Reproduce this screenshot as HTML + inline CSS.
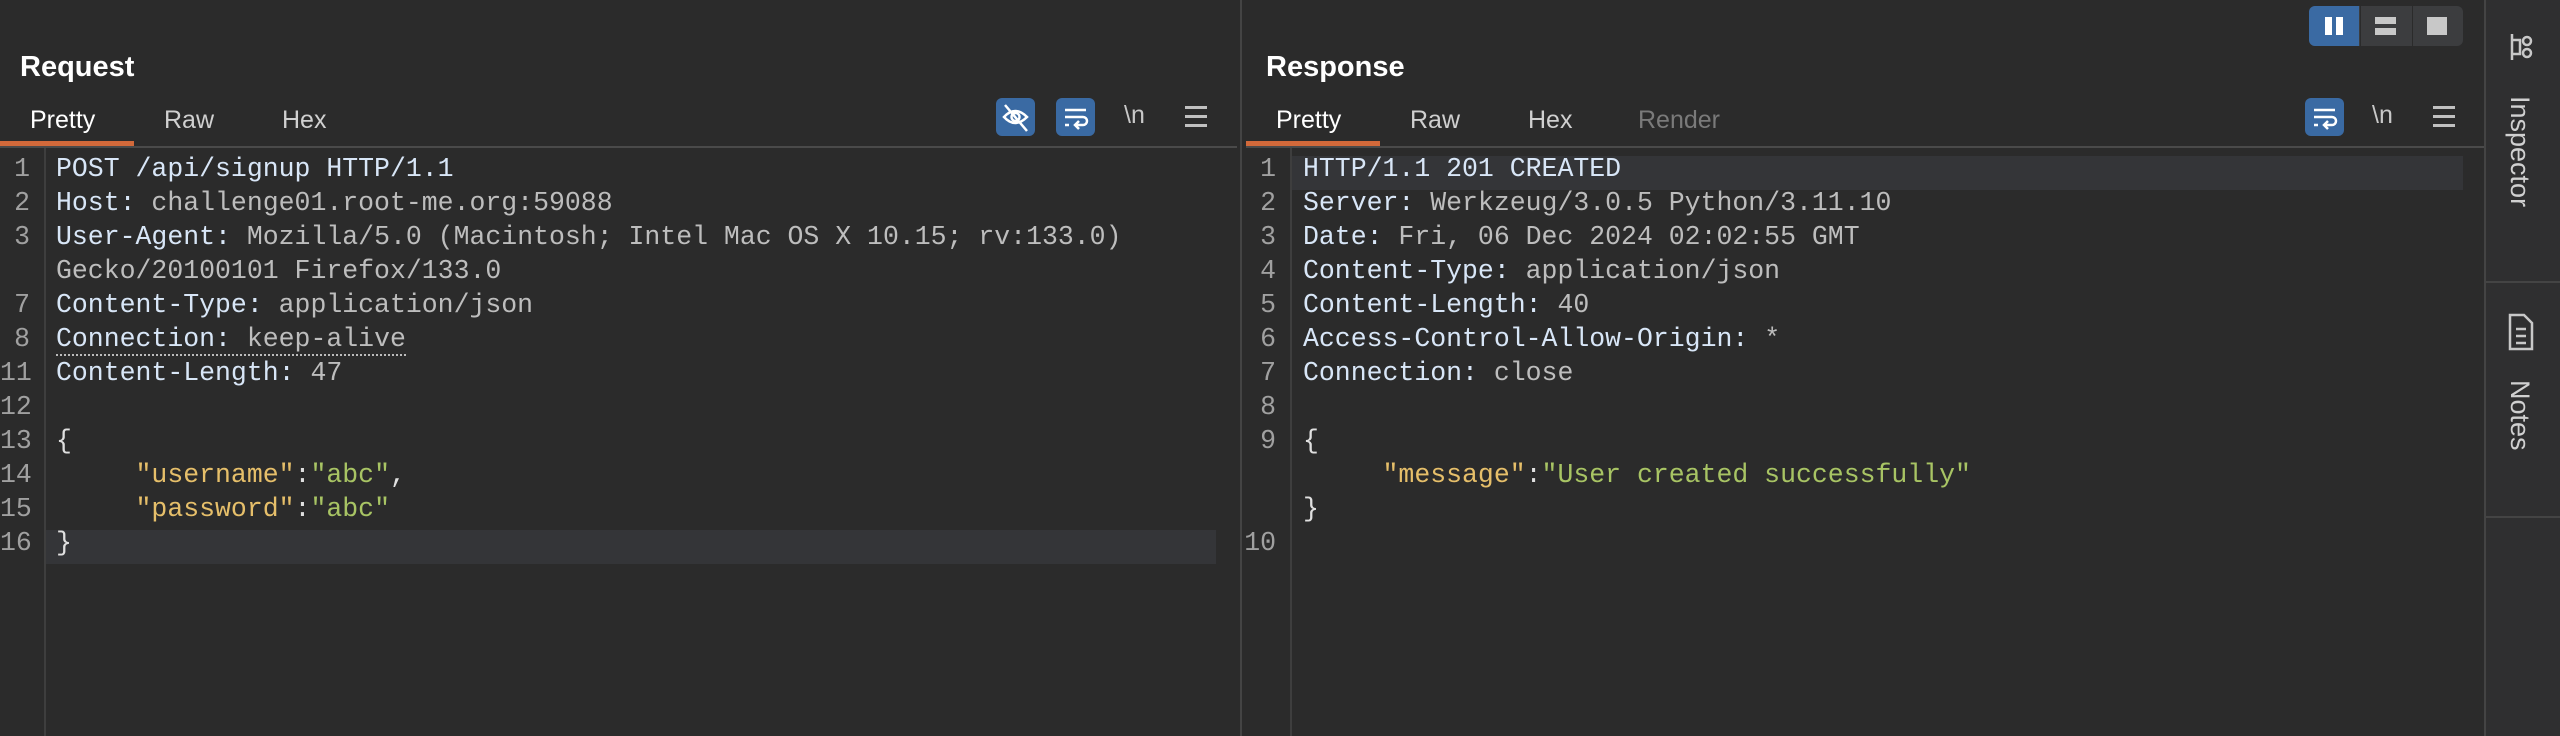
<!DOCTYPE html>
<html><head><meta charset="utf-8"><style>
*{margin:0;padding:0;box-sizing:border-box}
body{width:2560px;height:736px;background:#2b2b2b;overflow:hidden;position:relative;font-family:"Liberation Sans",sans-serif}
.abs{position:absolute}
.title{font-weight:bold;font-size:29px;color:#fff;top:51px}
.tab{font-size:25px;color:#d0d0d0;top:106px}
.code{font-family:"Liberation Mono",monospace;font-size:26.5px;white-space:pre;line-height:34px}
.ln{color:#a0a0a0;text-align:right}
.k{color:#d8e6f7}.v{color:#bdbdbd}.y{color:#e6bf6a}.g{color:#a8c464}.w{color:#e0e0e0}
.btn{background:#3a6aa3;border-radius:6px}
</style></head><body>
<div class="abs title" style="left:20px">Request</div>
<div class="abs tab" style="left:30px;color:#fff">Pretty</div>
<div class="abs tab" style="left:164px">Raw</div>
<div class="abs tab" style="left:282px">Hex</div>
<div class="abs" style="left:0;top:141px;width:134px;height:5px;background:#d2693a"></div>
<div class="abs" style="left:0;top:146px;width:1237px;height:2px;background:#4a4a4a"></div>
<div class="abs btn" style="left:996px;top:98px;width:39px;height:38px">
<svg width="39" height="38" viewBox="0 0 39 38"><path d="M8 19 Q19 7 31 19 Q19 31 8 19Z" fill="none" stroke="#fff" stroke-width="2.5"/><circle cx="19.5" cy="19" r="4" fill="none" stroke="#fff" stroke-width="2.5"/><line x1="9" y1="7" x2="31" y2="33" stroke="#fff" stroke-width="2.5"/></svg></div>
<div class="abs btn" style="left:1056px;top:98px;width:39px;height:38px">
<svg width="39" height="38" viewBox="0 0 39 38"><path d="M9 12H30M9 19H27a4 4 0 0 1 0 8H20M23 23l-4 4 4 4M9 27h4" fill="none" stroke="#fff" stroke-width="2.5"/></svg></div>
<div class="abs" style="left:1124px;top:101px;font-size:25px;color:#c8c8c8">\n</div>
<div class="abs" style="left:1185px;top:106px;width:22px"><div style="height:3px;background:#c0c0c0;margin-bottom:6px"></div><div style="height:3px;background:#c0c0c0;margin-bottom:6px"></div><div style="height:3px;background:#c0c0c0"></div></div>
<div class="abs" style="left:44px;top:148px;width:2px;height:588px;background:#3e3e3e"></div>
<div class="abs" style="left:46px;top:530px;width:1170px;height:34px;background:#343538"></div>
<div class="abs code ln" style="left:0;top:152px;width:30px">1
2
3

7
8
11
12
13
14
15
16</div>
<div class="abs code" style="left:56px;top:152px"><span class="k">POST /api/signup HTTP/1.1</span>
<span class="k">Host: </span><span class="v">challenge01.root-me.org:59088</span>
<span class="k">User-Agent: </span><span class="v">Mozilla/5.0 (Macintosh; Intel Mac OS X 10.15; rv:133.0)</span>
<span class="v">Gecko/20100101 Firefox/133.0</span>
<span class="k">Content-Type: </span><span class="v">application/json</span>
<span style="border-bottom:2px dotted #bbb"><span class="k">Connection: </span><span class="v">keep-alive</span></span>
<span class="k">Content-Length: </span><span class="v">47</span>

<span class="w">{</span>
     <span class="y">"username"</span><span class="w">:</span><span class="g">"abc"</span><span class="w">,</span>
     <span class="y">"password"</span><span class="w">:</span><span class="g">"abc"</span>
<span class="w">}</span></div>
<div class="abs" style="left:1240px;top:0;width:2px;height:736px;background:#444"></div>
<div class="abs title" style="left:1266px">Response</div>
<div class="abs tab" style="left:1276px;color:#fff">Pretty</div>
<div class="abs tab" style="left:1410px">Raw</div>
<div class="abs tab" style="left:1528px">Hex</div>
<div class="abs tab" style="left:1638px;color:#7a7a7a">Render</div>
<div class="abs" style="left:1246px;top:141px;width:134px;height:5px;background:#d2693a"></div>
<div class="abs" style="left:1246px;top:146px;width:1238px;height:2px;background:#4a4a4a"></div>
<div class="abs btn" style="left:2305px;top:98px;width:39px;height:38px">
<svg width="39" height="38" viewBox="0 0 39 38"><path d="M9 12H30M9 19H27a4 4 0 0 1 0 8H20M23 23l-4 4 4 4M9 27h4" fill="none" stroke="#fff" stroke-width="2.5"/></svg></div>
<div class="abs" style="left:2372px;top:101px;font-size:25px;color:#c8c8c8">\n</div>
<div class="abs" style="left:2433px;top:106px;width:22px"><div style="height:3px;background:#c0c0c0;margin-bottom:6px"></div><div style="height:3px;background:#c0c0c0;margin-bottom:6px"></div><div style="height:3px;background:#c0c0c0"></div></div>
<div class="abs" style="left:2309px;top:6px;width:154px;height:40px;background:#3c3d3f;border-radius:6px;overflow:hidden">
<div class="abs" style="left:0;top:0;width:50px;height:40px;background:#3a6aa3"></div>
<div class="abs" style="left:16px;top:11px;width:7px;height:18px;background:#fff"></div>
<div class="abs" style="left:27px;top:11px;width:7px;height:18px;background:#fff"></div>
<div class="abs" style="left:51px;top:0;width:1px;height:40px;background:#2b2b2b"></div>
<div class="abs" style="left:66px;top:11px;width:21px;height:7px;background:#c8c8c8"></div>
<div class="abs" style="left:66px;top:22px;width:21px;height:7px;background:#c8c8c8"></div>
<div class="abs" style="left:103px;top:0;width:1px;height:40px;background:#2b2b2b"></div>
<div class="abs" style="left:118px;top:11px;width:20px;height:18px;background:#c8c8c8"></div>
</div>
<div class="abs" style="left:1290px;top:148px;width:2px;height:588px;background:#3e3e3e"></div>
<div class="abs" style="left:1292px;top:156px;width:1171px;height:34px;background:#343538"></div>
<div class="abs code ln" style="left:1242px;top:152px;width:34px">1
2
3
4
5
6
7
8
9


10</div>
<div class="abs code" style="left:1303px;top:152px"><span class="k">HTTP/1.1 201 CREATED</span>
<span class="k">Server: </span><span class="v">Werkzeug/3.0.5 Python/3.11.10</span>
<span class="k">Date: </span><span class="v">Fri, 06 Dec 2024 02:02:55 GMT</span>
<span class="k">Content-Type: </span><span class="v">application/json</span>
<span class="k">Content-Length: </span><span class="v">40</span>
<span class="k">Access-Control-Allow-Origin: </span><span class="v">*</span>
<span class="k">Connection: </span><span class="v">close</span>

<span class="w">{</span>
     <span class="y">"message"</span><span class="w">:</span><span class="g">"User created successfully"</span>
<span class="w">}</span></div>
<div class="abs" style="left:2484px;top:0;width:76px;height:736px;background:#2f2f30;border-left:2px solid #444"></div>
<div class="abs" style="left:2486px;top:281px;width:74px;height:2px;background:#444"></div>
<div class="abs" style="left:2486px;top:516px;width:74px;height:2px;background:#444"></div>
<svg class="abs" style="left:2508px;top:32px" width="26" height="30" viewBox="0 0 26 30"><g fill="none" stroke="#c8c8c8" stroke-width="2.5"><path d="M4 2V28M4 8H12V22H4"/><circle cx="19" cy="9" r="4"/><circle cx="19" cy="21" r="4"/></g></svg>
<div class="abs" style="left:2505px;top:96px;width:30px;height:140px;"><div style="transform:rotate(90deg);transform-origin:0 0;position:absolute;left:30px;top:0;font-size:27px;color:#d0d0d0;white-space:nowrap">Inspector</div></div>
<svg class="abs" style="left:2506px;top:313px" width="30" height="38" viewBox="0 0 30 38"><g fill="none" stroke="#c8c8c8" stroke-width="2.5"><path d="M4 2H18L26 10V36H4Z"/><path d="M10 16H20M10 23H20M10 30H20"/></g></svg>
<div class="abs" style="left:2505px;top:380px;width:30px;height:100px;"><div style="transform:rotate(90deg);transform-origin:0 0;position:absolute;left:30px;top:0;font-size:27px;color:#d0d0d0;white-space:nowrap">Notes</div></div>
</body></html>
